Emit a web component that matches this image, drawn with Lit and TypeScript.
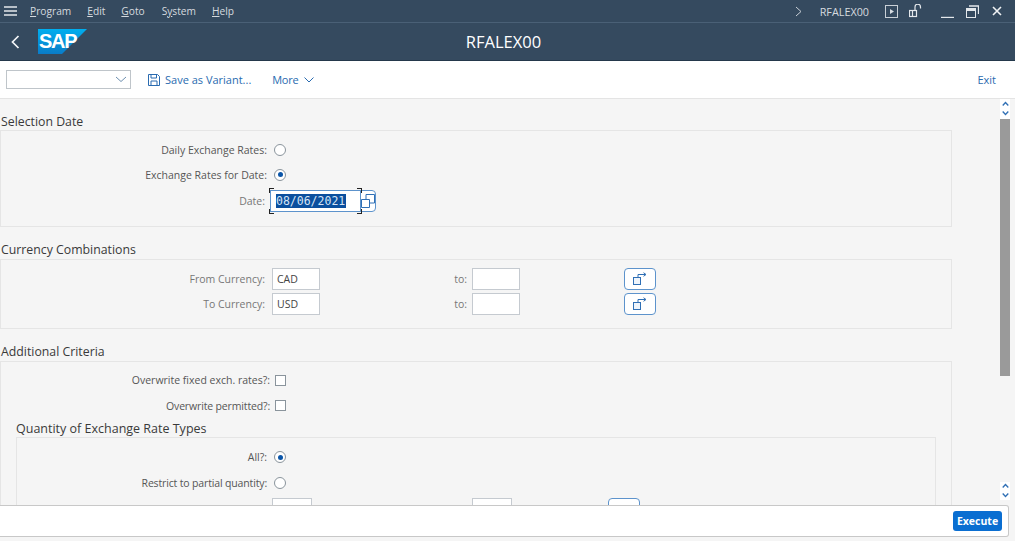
import { LitElement, html, css, svg } from "lit";
import { customElement } from "lit/decorators.js";

const chevUp = svg`<path d="M.7 4.5 L3.5 1.5 L6.3 4.5" fill="none" stroke="#2f6fb5" stroke-width="1.3"/>`;
const chevDown = svg`<path d="M.7 1.5 L3.5 4.5 L6.3 1.5" fill="none" stroke="#2f6fb5" stroke-width="1.3"/>`;
const multi = html`<svg width="14" height="13" viewBox="0 0 14 13"><rect x=".5" y="5.5" width="7" height="7" fill="#eef4fb" stroke="#2f6fb5"/><path d="M5 5V2.5H12.5M10.5 .7L13 2.5 10.5 4.3" fill="none" stroke="#2f6fb5"/></svg>`;

@customElement("app-root")
export class AppRoot extends LitElement {
  static styles = css`
    :host { display: block; width: 1024px; height: 541px; background: #fff; overflow: hidden;
      font-family: "Open Sans", "Noto Sans", sans-serif; font-size: 10.5px; color: #666; }
    .app { width: 1015px; height: 541px; display: flex; flex-direction: column; background: #f5f5f5; }
    .menubar { height: 22px; flex: none; background: #354a5f; color: #d5dadf; display: flex; align-items: center;
      border-bottom: 1px solid #4a6076; font-size: 10.2px; }
    .burger { margin-left: 4px; width: 13px; height: 10px; display: block; }
    .menus { display: flex; margin-left: 13px; gap: 16px; }
    .menus span:nth-child(4) { margin-left: 1px; }
    .menus u { text-decoration: underline; text-underline-offset: 1px; text-decoration-thickness: 1px; }
    .sys { margin-left: auto; display: flex; align-items: center; }
    .sys .name { margin-left: 18px; font-size: 10.8px; }
    .sys svg { display: block; }
    .sp-play { margin-left: 16px; }
    .sp-lock { margin-left: 11px; }
    .sp-min { margin-left: 18px; }
    .sp-res { margin-left: 12px; }
    .sp-x { margin: 0 13px 0 13px; }
    .title { height: 37px; flex: none; background: #354a5f; border-bottom: 1px solid #24384b; display: flex; align-items: center;
      position: relative; }
    .back { margin-left: 11px; display: block; }
    .logo { margin-left: 18px; width: 49px; height: 25px; position: relative; flex: none; }
    .logo svg { display: block; }
    .logo span { position: absolute; left: 1px; top: 2px; font: bold 20px/21px "Liberation Sans", sans-serif; color: #fff; letter-spacing: -1.3px; }
    .title h1 { position: absolute; left: 0; right: 8px; text-align: center; margin: 0; font-size: 16.5px; font-weight: 400; color: #fff; }
    .toolbar { height: 37px; flex: none; background: #fff; border-bottom: 1px solid #e4e4e4; display: flex; align-items: center; color: #2a6bb0; font-size: 11px; }
    .combo { margin: 0 0 1px 6px; width: 120px; height: 17px; border: 1px solid #bfc5ca; background: #fff; display: flex; align-items: center; justify-content: flex-end; padding-right: 3px; }
    .save { margin-left: 17px; display: flex; align-items: center; gap: 5px; }
    .more { margin-left: 21px; display: flex; align-items: center; gap: 6px; }
    .more span { letter-spacing: -0.3px; }
    .exit { margin-left: auto; margin-right: 19px; }
    .content { height: 406px; flex: none; display: flex; overflow: hidden; position: relative; }
    .main { width: 1000px; flex: none; overflow: hidden; }
    .sect { width: 952px; }
    .sect h2, .inner h2 { margin: 0; height: 19px; font-size: 12.3px; line-height: 19px; font-weight: 400; color: #3a3a3a; white-space: nowrap; padding-left: 1px; }
    .inner h2 { padding-left: 0; font-size: 12.5px; line-height: 21px; }
    .sect.first h2 { line-height: 21px; }
    .sect.first { padding-top: 12px; }
    .sect.next { margin-top: 13px; }
    .box { border: 1px solid #e5e5e5; box-sizing: border-box; }
    .b1 { height: 97px; padding-top: 6px; }
    .b2 { height: 70px; padding-top: 6px; }
    .b3 { padding-top: 5px; border-bottom: 0; }
    .row { height: 25px; display: flex; align-items: center; white-space: nowrap; }
    .row.tall { height: 26px; }
    .row.dt { height: 27px; }
    .label { text-align: right; flex: none; }
    .tight { letter-spacing: -0.15px; }
    .w-rad { width: 266px; color: #555; }
    .w-date { width: 264px; color: #777; }
    .w-cur { width: 264px; color: #777; }
    .w-chk { width: 269px; color: #555; }
    .w-in { width: 250px; color: #555; }
    .ctl { margin-left: 7px; }
    .radio { width: 12px; height: 12px; border-radius: 50%; border: 1px solid #8a949c; background: #fff; box-sizing: border-box; flex: none; display: flex; align-items: center; justify-content: center; }
    .radio.on::after { content: ""; width: 5px; height: 5px; border-radius: 50%; background: #0a55a8; }
    .check { width: 11px; height: 11px; border: 1px solid #8a949c; background: #fff; box-sizing: border-box; flex: none; margin-left: 5px; }
    .date { margin-left: 5px; display: flex; align-items: center; position: relative; }
    .date .field { width: 91px; height: 22px; box-sizing: border-box; background: #fff; border: 1px solid #5d93cc; display: flex; align-items: center; padding-left: 5px;
      font-family: "DejaVu Sans Mono", monospace; font-size: 11.5px; }
    .date .field span { background: #0b4f9e; color: #d6e4f5; line-height: 14px; padding: 0 1px 0 0; }
    .corner { position: absolute; width: 4px; height: 4px; border: 0 solid #222; }
    .c1 { left: -1px; top: -2px; border-width: 1.5px 0 0 1.5px; }
    .c2 { left: 87px; top: -2px; border-width: 1.5px 1.5px 0 0; }
    .c3 { left: -1px; bottom: -2px; border-width: 0 0 1.5px 1.5px; }
    .c4 { left: 87px; bottom: -2px; border-width: 0 1.5px 1.5px 0; }
    .date .btn { width: 16px; height: 22px; box-sizing: border-box; margin-left: -1px; border: 1px solid #5d93cc; border-radius: 0 4px 4px 0; background: #fff; display: flex; align-items: center; justify-content: center; }
    .input { width: 48px; height: 22px; box-sizing: border-box; border: 1px solid #c5cad0; background: #fff; display: flex; align-items: center; padding-left: 4px; color: #444; font-size: 10.5px; flex: none; }
    .to { width: 147px; text-align: right; flex: none; color: #777; }
    .ctl2 { margin-left: 5px; }
    .mbtn { margin-left: 104px; width: 32px; height: 22px; box-sizing: border-box; border: 1px solid #5d93cc; border-radius: 4px; background: #fff; display: flex; align-items: center; justify-content: center; flex: none; }
    .inner { margin: 0 0 0 15px; width: 920px; }
    .inner .box { padding-top: 6px; height: 200px; }
    .in3row { height: 25px; margin-top: 2px; display: flex; }
    .in3row .input { width: 40px; }
    .in3row .ctl { margin-left: 5px; }
    .in3row .to2 { width: 160px; flex: none; }
    .in3row .mbtn { margin-left: 96px; }
    .scroll { width: 10px; flex: none; position: relative; display: flex; flex-direction: column; }
    .arrows { background: #fff; height: 20px; flex: none; display: flex; flex-direction: column; align-items: center; gap: 3px; padding-top: 2px; box-sizing: border-box; }
    .arrows svg { display: block; }
    .thumb { background: #9a9a9a; height: 257px; flex: none; }
    .arrows.bot { margin-top: auto; margin-bottom: 5px; height: 18px; padding-top: 1px; }
    .footer { height: 32px; flex: none; width: 1009px; box-sizing: border-box; background: #fff; border: 1px solid #c8c8c8; border-left: 0; border-radius: 0 3px 3px 0; display: flex; align-items: center; justify-content: flex-end; padding-right: 6px; }
    .exec { width: 49px; height: 20px; border-radius: 3px; background: #0a6ed1; color: #fff; font-weight: 700; font-size: 10.5px; display: flex; align-items: center; justify-content: center; }
  `;

  render() {
    return html`<div class="app">
      <div class="menubar">
        <svg class="burger" viewBox="0 0 13 10"><path d="M0 1h13M0 5h13M0 9h13" stroke="#e4e8ec" stroke-width="1.4"/></svg>
        <div class="menus">
          <span><u>P</u>rogram</span><span><u>E</u>dit</span><span><u>G</u>oto</span><span>S<u>y</u>stem</span><span><u>H</u>elp</span>
        </div>
        <div class="sys">
          <svg width="7" height="11" viewBox="0 0 7 11"><path d="M1 1l5 4.5L1 10" fill="none" stroke="#c9d0d7"/></svg>
          <span class="name">RFALEX00</span>
          <svg class="sp-play" width="13" height="13" viewBox="0 0 13 13"><rect x=".5" y=".5" width="12" height="12" fill="none" stroke="#c9d0d7"/><path d="M5 4l4 2.5L5 9z" fill="#d8dde2"/></svg>
          <svg class="sp-lock" width="14" height="14" viewBox="0 0 14 14"><rect x=".5" y="6.5" width="7" height="6" fill="none" stroke="#e4e8ec" stroke-width="1.2"/><path d="M3.5 7v5M6 6V3a2.7 2.7 0 0 1 5.5 0v1.5" fill="none" stroke="#e4e8ec" stroke-width="1.2"/></svg>
          <svg class="sp-min" width="13" height="13" viewBox="0 0 13 13"><path d="M0 12.5h13" stroke="#e4e8ec" stroke-width="1.4"/></svg>
          <svg class="sp-res" width="13" height="13" viewBox="0 0 13 13"><rect x=".5" y="3.5" width="9" height="9" fill="none" stroke="#e4e8ec"/><path d="M.5 5h9" stroke="#e4e8ec" stroke-width="2"/><path d="M3 1h9.5v8" fill="none" stroke="#e4e8ec" stroke-width="1.3"/></svg>
          <svg class="sp-x" width="10" height="10" viewBox="0 0 10 10"><path d="M1 1l8 8M9 1l-8 8" stroke="#f0f2f4" stroke-width="1.6"/></svg>
        </div>
      </div>
      <div class="title">
        <svg class="back" width="9" height="14" viewBox="0 0 9 14"><path d="M7.5 1L1.5 7l6 6" fill="none" stroke="#f4f6f8" stroke-width="1.7"/></svg>
        <div class="logo">
          <svg width="49" height="25" viewBox="0 0 49 25"><defs><linearGradient id="g" x1="0" y1="0" x2="0" y2="1"><stop offset="0" stop-color="#00aeef"/><stop offset="1" stop-color="#0a7cc8"/></linearGradient></defs><path d="M0 0H49L24 25H0Z" fill="url(#g)"/></svg>
          <span>SAP</span>
        </div>
        <h1>RFALEX00</h1>
      </div>
      <div class="toolbar">
        <div class="combo"><svg width="12" height="7" viewBox="0 0 12 7"><path d="M1 1l5 4.5L11 1" fill="none" stroke="#6d8fb0"/></svg></div>
        <div class="save">
          <svg width="12" height="12" viewBox="0 0 12 12"><path d="M.5.5H9.5L11.5 2.5V11.5H.5Z M3 .5V4H8.5V.5 M3 11.5V7H9V11.5" fill="none" stroke="#2a6bb0"/></svg>
          <span>Save as Variant...</span>
        </div>
        <div class="more"><span>More</span><svg width="10" height="6" viewBox="0 0 10 6"><path d="M.5.5L5 5 9.5.5" fill="none" stroke="#2a6bb0"/></svg></div>
        <span class="exit">Exit</span>
      </div>
      <div class="content">
        <div class="main">
          <div class="sect first">
            <h2>Selection Date</h2>
            <div class="box b1">
              <div class="row"><span class="label w-rad">Daily Exchange Rates:</span><span class="ctl radio"></span></div>
              <div class="row"><span class="label w-rad">Exchange Rates for Date:</span><span class="ctl radio on"></span></div>
              <div class="row dt"><span class="label w-date">Date:</span>
                <div class="date">
                  <div class="field"><span>08/06/2021</span></div>
                  <i class="corner c1"></i><i class="corner c2"></i><i class="corner c3"></i><i class="corner c4"></i>
                  <div class="btn"><svg width="14" height="14" viewBox="0 0 14 14"><path d="M.5 5.5H8.5V13.5H.5Z M5 5.5V.5H13.5V9H8.5" fill="none" stroke="#2f6fb5"/></svg></div>
                </div>
              </div>
            </div>
          </div>
          <div class="sect next">
            <h2>Currency Combinations</h2>
            <div class="box b2">
              <div class="row"><span class="label w-cur">From Currency:</span><span class="ctl input">CAD</span><span class="to">to:</span><span class="ctl2 input"></span><span class="mbtn">${multi}</span></div>
              <div class="row"><span class="label w-cur">To Currency:</span><span class="ctl input">USD</span><span class="to">to:</span><span class="ctl2 input"></span><span class="mbtn">${multi}</span></div>
            </div>
          </div>
          <div class="sect next">
            <h2>Additional Criteria</h2>
            <div class="box b3">
              <div class="row tall"><span class="label w-chk">Overwrite fixed exch. rates?:</span><span class="check"></span></div>
              <div class="row"><span class="label w-chk tight">Overwrite permitted?:</span><span class="check"></span></div>
              <div class="inner">
                <h2>Quantity of Exchange Rate Types</h2>
                <div class="box">
                  <div class="row tall"><span class="label w-in">All?:</span><span class="ctl radio on"></span></div>
                  <div class="row tall"><span class="label w-in tight">Restrict to partial quantity:</span><span class="ctl radio"></span></div>
                  <div class="in3row"><span class="label w-in"></span><span class="ctl input"></span><span class="to2"></span><span class="input"></span><span class="mbtn"></span></div>
                </div>
              </div>
            </div>
          </div>
        </div>
        <div class="scroll">
          <div class="arrows">
            <svg width="7" height="6" viewBox="0 0 7 6">${chevUp}</svg>
            <svg width="7" height="6" viewBox="0 0 7 6">${chevDown}</svg>
          </div>
          <div class="thumb"></div>
          <div class="arrows bot">
            <svg width="7" height="6" viewBox="0 0 7 6">${chevUp}</svg>
            <svg width="7" height="6" viewBox="0 0 7 6">${chevDown}</svg>
          </div>
        </div>
      </div>
      <div class="footer"><div class="exec">Execute</div></div>
    </div>`;
  }
}
